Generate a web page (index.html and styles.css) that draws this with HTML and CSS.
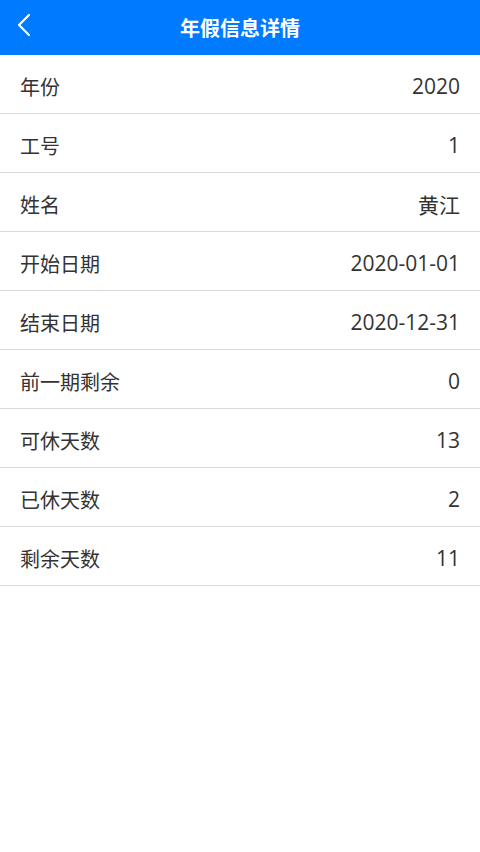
FILE: index.html
```html
<!DOCTYPE html>
<html lang="zh-CN">
<head>
<meta charset="utf-8">
<title>年假信息详情</title>
<link rel="stylesheet" href="styles.css">
</head>
<body>
<header class="navbar">
  <span class="back">
    <svg width="16" height="24" viewBox="0 0 16 24"><path d="M13 2 L3 12 L13 22" fill="none" stroke="#fff" stroke-width="2.2" stroke-linecap="round" stroke-linejoin="round"/></svg>
  </span>
  <h1 class="title">年假信息详情</h1>
</header>
<ul class="list">
  <li class="row"><span class="label">年份</span><span class="value">2020</span></li>
  <li class="row"><span class="label">工号</span><span class="value">1</span></li>
  <li class="row"><span class="label">姓名</span><span class="value">黄江</span></li>
  <li class="row"><span class="label">开始日期</span><span class="value">2020-01-01</span></li>
  <li class="row"><span class="label">结束日期</span><span class="value">2020-12-31</span></li>
  <li class="row"><span class="label">前一期剩余</span><span class="value">0</span></li>
  <li class="row"><span class="label">可休天数</span><span class="value">13</span></li>
  <li class="row"><span class="label">已休天数</span><span class="value">2</span></li>
  <li class="row"><span class="label">剩余天数</span><span class="value">11</span></li>
</ul>
</body>
</html>
```
FILE: styles.css
```css
* { box-sizing: border-box; }
html, body { margin: 0; padding: 0; background: #fff; }
body { font-family: "Open Sans", "Noto Sans CJK SC", sans-serif; color: #333; }
.navbar {
  height: 55px;
  background: #007aff;
  display: flex;
  align-items: center;
  justify-content: center;
  position: relative;
}
.back {
  position: absolute;
  left: 16px;
  top: 13px;
  display: flex;
}
.title {
  margin: 0;
  color: #fff;
  font-size: 20px;
  font-weight: 700;
  font-family: "Noto Sans CJK SC", sans-serif;
}
.list { list-style: none; margin: 0; padding: 0; }
.row {
  height: 59px;
  border-bottom: 1px solid #d9d9d9;
  display: flex;
  align-items: center;
  justify-content: space-between;
  padding: 4px 20px 0;
  font-size: 20px;
}
.label { font-family: "Noto Sans CJK SC", sans-serif; }
.value { font-family: "Open Sans", "Noto Sans CJK SC", sans-serif; font-size: 21px; }
```
